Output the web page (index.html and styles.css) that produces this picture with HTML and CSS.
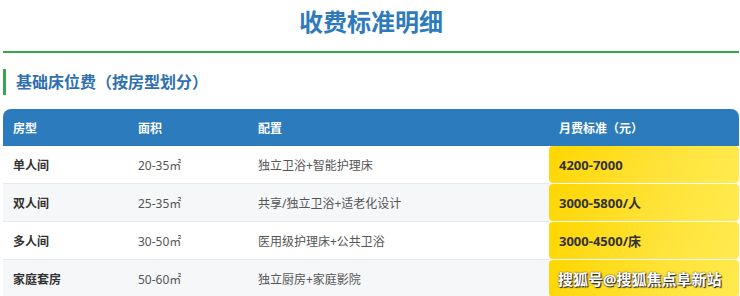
FILE: index.html
```html
<!DOCTYPE html>
<html lang="zh-CN">
<head>
<meta charset="utf-8">
<title>收费标准明细</title>
<link rel="stylesheet" href="styles.css">
</head>
<body>
<div class="page">
  <h1 class="title">收费标准明细</h1>
  <h2 class="subhead">基础床位费（按房型划分）</h2>
  <table class="fees">
    <colgroup>
      <col class="c1"><col class="c2"><col class="c3"><col class="c4">
    </colgroup>
    <thead>
      <tr><th>房型</th><th>面积</th><th>配置</th><th>月费标准（元）</th></tr>
    </thead>
    <tbody>
      <tr><td class="type">单人间</td><td>20-35㎡</td><td>独立卫浴+智能护理床</td><td class="price"><span>4200-7000</span></td></tr>
      <tr><td class="type">双人间</td><td>25-35㎡</td><td>共享/独立卫浴+适老化设计</td><td class="price"><span>3000-5800/人</span></td></tr>
      <tr><td class="type">多人间</td><td>30-50㎡</td><td>医用级护理床+公共卫浴</td><td class="price"><span>3000-4500/床</span></td></tr>
      <tr><td class="type">家庭套房</td><td>50-60㎡</td><td>独立厨房+家庭影院</td><td class="price"><span></span></td></tr>
    </tbody>
  </table>
  <div class="watermark">搜狐号@搜狐焦点阜新站</div>
</div>
</body>
</html>
```

FILE: styles.css
```css
html, body {
  margin: 0;
  padding: 0;
  background: #ffffff;
  font-family: "Noto Sans", "Noto Sans CJK SC", sans-serif;
  color: #333333;
}
.page {
  position: relative;
  width: 740px;
  height: 296px;
  overflow: hidden;
  padding: 0 1px 0 3px;
  box-sizing: border-box;
}
.title {
  margin: 0;
  padding: 7px 0 14px;
  font-size: 24px;
  line-height: 30px;
  font-weight: 700;
  color: #2d7bbd;
  text-align: center;
  border-bottom: 2px solid #34a84a;
}
.subhead {
  margin: 16px 0 14px;
  height: 26px;
  line-height: 26px;
  padding-left: 10px;
  border-left: 3px solid #34a84a;
  font-size: 16px;
  font-weight: 700;
  color: #2f70b0;
}
.fees {
  width: 736px;
  border-collapse: separate;
  border-spacing: 0;
  table-layout: fixed;
  font-size: 12px;
}
.c1 { width: 125px; }
.c2 { width: 120px; }
.c3 { width: 301px; }
.c4 { width: 190px; }
.fees th {
  background: #2c7bbd;
  color: #ffffff;
  font-weight: 700;
  text-align: left;
  height: 37px;
  padding: 0 10px;
  font-size: 12px;
}
.fees th:first-child { border-top-left-radius: 8px; }
.fees th:last-child { border-top-right-radius: 8px; }
.fees td {
  height: 37px;
  padding: 0 10px;
  border-bottom: 1px solid #e6e8ec;
  color: #555555;
}
.fees tbody tr:nth-child(even) td { background: #f6f7f9; }
.fees td.type { font-weight: 700; color: #333333; }
.fees td.price {
  padding: 0;
  border-bottom: none;
}
.fees tbody tr td.price { background: #ffffff; }
.fees td.price span {
  display: flex;
  align-items: center;
  height: 37px;
  margin-bottom: 1px;
  padding: 0 10px;
  border-radius: 4px;
  background: linear-gradient(120deg, #ffd600 0%, #ffe33a 60%, #ffeb50 100%);
  font-weight: 700;
  font-size: 13px;
  color: #333333;
}
.watermark {
  position: absolute;
  left: 558px;
  top: 268px;
  font-size: 15px;
  line-height: 22px;
  font-weight: 700;
  color: #ffffff;
  text-shadow: 1px 1px 1px #222222, 0 0 2px #444444;
}
```
